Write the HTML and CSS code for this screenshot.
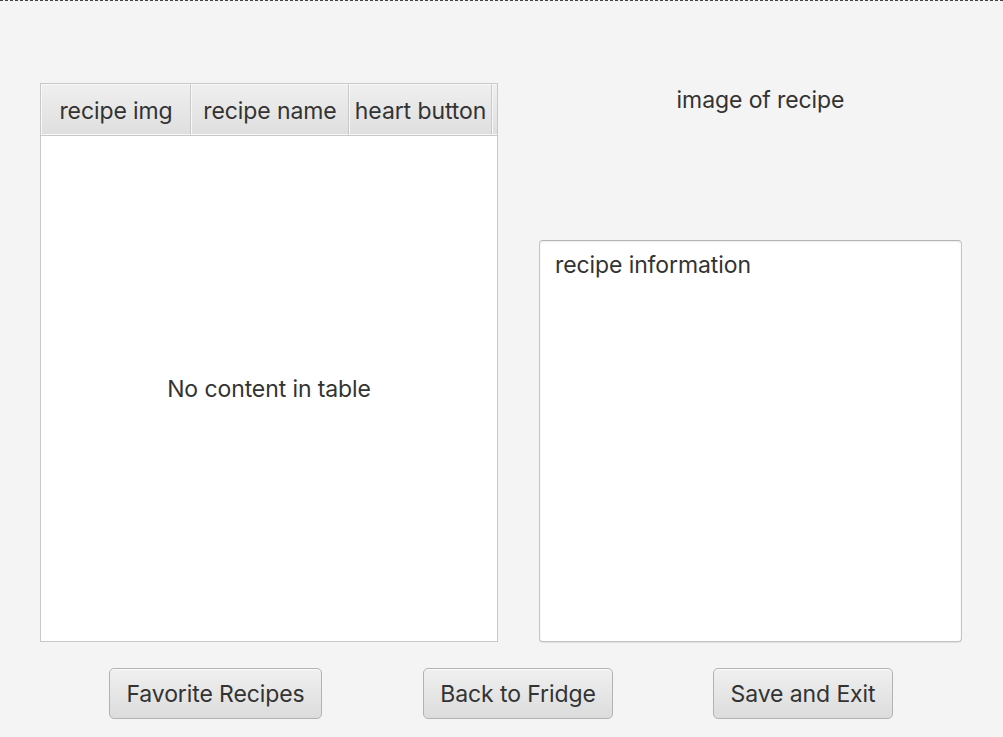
FILE: index.html
```html
<!DOCTYPE html>
<html>
<head>
<meta charset="utf-8">
<link rel="stylesheet" href="styles.css">
</head>
<body>
<div class="window">
  <div class="main">
    <div class="table">
      <div class="thead">
        <div class="th col-img">recipe img</div>
        <div class="th col-name">recipe name</div>
        <div class="th col-heart">heart button</div>
        <div class="th col-fill"></div>
      </div>
      <div class="tbody">No content in table</div>
    </div>
    <div class="side">
      <div class="image-label">image of recipe</div>
      <div class="info">recipe information</div>
    </div>
  </div>
  <div class="footer">
    <button class="btn btn-fav">Favorite Recipes</button>
    <button class="btn btn-back">Back to Fridge</button>
    <button class="btn btn-save">Save and Exit</button>
  </div>
</div>
</body>
</html>
```
FILE: styles.css
```css
html, body {
  margin: 0;
  padding: 0;
  background: #f4f4f4;
}
body {
  font-family: Inter, "Noto Sans", sans-serif;
  color: #333333;
}
.window {
  width: 1003px;
  height: 737px;
  box-sizing: border-box;
  border-top: 1px dashed #444;
  display: flex;
  flex-direction: column;
}
.main {
  display: flex;
  padding: 82px 0 0 40px;
  height: 559px;
}
.table {
  width: 458px;
  height: 559px;
  box-sizing: border-box;
  border: 1px solid #c8c8c8;
  display: flex;
  flex-direction: column;
  background: #fff;
}
.thead {
  display: flex;
  height: 52px;
  box-sizing: border-box;
  border-bottom: 1px solid #c8c8c8;
  background: #f4f4f4;
}
.th {
  box-sizing: border-box;
  height: 51px;
  padding-top: 2px;
  background: linear-gradient(#efefef, #dfdfdf);
  border: 1px solid #f8f8f8;
  border-right: 1px solid #c8c8c8;
  display: flex;
  align-items: center;
  justify-content: center;
  font-size: 23px;
  letter-spacing: -0.1px;
  white-space: nowrap;
  overflow: hidden;
}
.col-img { width: 150px; }
.col-name { width: 158px; }
.col-heart { width: 143px; }
.col-fill { width: 5px; border-right: none; }
.tbody {
  flex: 1;
  display: flex;
  align-items: center;
  justify-content: center;
  font-size: 23px;
  letter-spacing: -0.1px;
}
.side {
  margin-left: 41px;
  width: 423px;
  display: flex;
  flex-direction: column;
}
.image-label {
  height: 157px;
  padding-left: 20px;
  box-sizing: border-box;
  text-align: center;
  font-size: 23px;
  letter-spacing: -0.1px;
  line-height: 34px;
}
.info {
  height: 402px;
  box-sizing: border-box;
  background: #fff;
  border: 1px solid #c4c4c4;
  border-top-color: #b4b4b4;
  border-radius: 4px;
  box-shadow: inset 0 1px 2px rgba(0,0,0,0.08), 0 1px 0 #e0e0e0;
  padding: 10px 15px;
  font-size: 23px;
  letter-spacing: -0.1px;
}
.footer {
  display: flex;
  padding-top: 26px;
}
.btn {
  height: 51px;
  box-sizing: border-box;
  border: 1px solid #b2b2b2;
  border-radius: 5px;
  background: linear-gradient(#f0f0f0, #dcdcdc);
  box-shadow: inset 0 1px 0 #fafafa;
  font-family: Inter, "Noto Sans", sans-serif;
  font-size: 23px;
  letter-spacing: -0.1px;
  color: #333333;
  padding: 0;
}
.btn-fav { width: 213px; margin-left: 109px; }
.btn-back { width: 190px; margin-left: 101px; }
.btn-save { width: 180px; margin-left: 100px; }
```
